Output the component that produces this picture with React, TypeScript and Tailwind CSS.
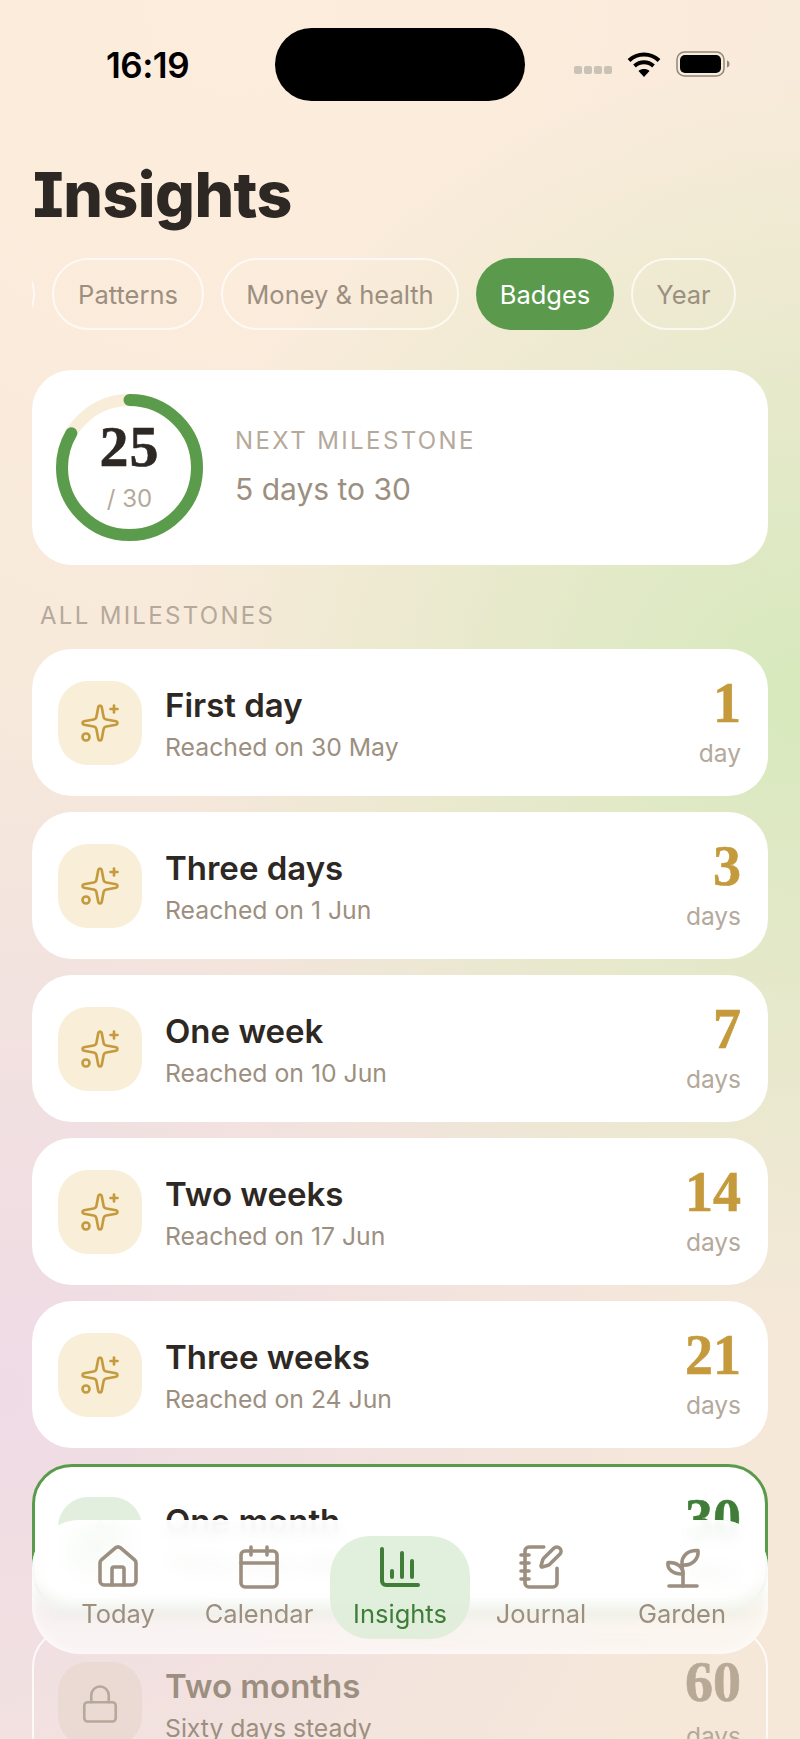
import { Calendar, ChartColumn, House, Lock, NotebookPen, Sparkles } from 'lucide-react';

const milestones = [
    { title: 'First day', sub: 'Reached on 30 May', num: '1', unit: 'day' },
    { title: 'Three days', sub: 'Reached on 1 Jun', num: '3', unit: 'days' },
    { title: 'One week', sub: 'Reached on 10 Jun', num: '7', unit: 'days' },
    { title: 'Two weeks', sub: 'Reached on 17 Jun', num: '14', unit: 'days' },
    { title: 'Three weeks', sub: 'Reached on 24 Jun', num: '21', unit: 'days' },
];

function SproutIcon({ className }: { className?: string }) {
    return (
        <svg viewBox="0 0 24 24" fill="none" stroke="currentColor" strokeWidth="1.8" strokeLinecap="round" strokeLinejoin="round" className={className}>
            <path d="M5.500 21.500h14" />
            <path d="M12.500 21.500V15.500c0-1.500-.5-3-.5-4.500" />
            <path d="M12.500 15.500C12.500 12 9.500 9.500 5 9.800 4.500 13 7.500 15.800 12.500 15.500z" />
            <path d="M12 11C11.500 6.500 15 3.500 20 3.800 20.500 8 17 11.500 12 11z" />
        </svg>
    );
}

function StatusBar() {
    return (
        <div className="flex h-[129px] items-start pt-7">
            <div className="w-[275px] pt-[17px] pl-[106px] text-[35px] leading-[40px] font-semibold tracking-[-0.5px] text-black">16:19</div>
            <div className="h-[73px] w-[250px] rounded-[37px] bg-black" />
            <div className="flex items-center pt-[23px] pl-[49px]">
                <div className="mt-3 flex gap-[2px]">
                    <span className="h-2 w-2 rounded-[2px] bg-[#c9c2b6]" />
                    <span className="h-2 w-2 rounded-[2px] bg-[#c9c2b6]" />
                    <span className="h-2 w-2 rounded-[2px] bg-[#c9c2b6]" />
                    <span className="h-2 w-2 rounded-[2px] bg-[#c9c2b6]" />
                </div>
                <svg viewBox="0 0 34 26" className="ml-[15px] h-[26px] w-[34px]" fill="none" stroke="black" strokeWidth="4">
                    <path d="M2 9.500C10.500 1.500 23.500 1.500 32 9.500" />
                    <path d="M7.500 15c5.500-5 13.500-5 19 0" />
                    <path d="M17 26l-5.500-6c3-2.600 8-2.600 11 0z" fill="black" stroke="none" />
                </svg>
                <svg viewBox="0 0 54 26" className="ml-[15px] h-[26px] w-[54px]">
                    <rect x="1" y="1" width="47" height="24" rx="7.500" fill="none" stroke="#8f8879" strokeWidth="1.500" />
                    <rect x="4" y="4" width="41" height="18" rx="5" fill="black" />
                    <path d="M51 9.500c2 .6 2.500 2 2.500 3.500s-.5 2.900-2.500 3.500z" fill="#8f8879" />
                </svg>
            </div>
        </div>
    );
}

function Chips() {
    return (
        <div className="mx-8 mt-[29px] flex gap-[17px] overflow-hidden text-[25.5px] text-[#9c8f80]">
            <div className="-ml-[100px] h-[72px] w-[103px] shrink-0 rounded-[36px] border-2 border-white/70" />
            <div className="flex h-[72px] w-[152px] shrink-0 items-center justify-center rounded-[36px] border-2 border-white/70 pt-[3px]">Patterns</div>
            <div className="flex h-[72px] w-[238px] shrink-0 items-center justify-center rounded-[36px] border-2 border-white/70 pt-[3px]">Money &amp; health</div>
            <div className="flex h-[72px] w-[138px] shrink-0 items-center justify-center rounded-[36px] bg-[#5b9a4c] pt-[3px] text-white">Badges</div>
            <div className="flex h-[72px] w-[105px] shrink-0 items-center justify-center rounded-[36px] border-2 border-white/70 pt-[3px]">Year</div>
        </div>
    );
}

function HeroCard() {
    const r = 67.5;
    const circ = 2 * Math.PI * r;
    return (
        <div className="mx-8 mt-10 flex h-[195px] items-center rounded-[40px] bg-white pl-6">
            <div className="relative h-[147px] w-[147px] shrink-0">
                <svg viewBox="0 0 147 147" className="h-full w-full -rotate-90">
                    <circle cx="73.5" cy="73.5" r={r} fill="none" stroke="#f8edd8" strokeWidth="12" />
                    <circle cx="73.5" cy="73.5" r={r} fill="none" stroke="#5a9c4c" strokeWidth="12" strokeLinecap="round" strokeDasharray={`${circ * (25 / 30)} ${circ}`} />
                </svg>
                <div className="absolute inset-0 flex flex-col items-center pt-6">
                    <span className="font-['Liberation_Serif',serif] text-[58px] leading-[58px] font-bold tracking-[1px] text-[#2d2823] [-webkit-text-stroke:0.6px_#2d2823]">25</span>
                    <span className="mt-[8px] text-[24px] leading-[30px] text-[#b5a99b]">/ 30</span>
                </div>
            </div>
            <div className="ml-8">
                <div className="-mt-[2px] text-[24px] leading-[30px] tracking-[2.4px] text-[#b5a99b]">NEXT MILESTONE</div>
                <div className="mt-[14px] text-[30px] leading-[38px] text-[#9c8f80]">5 days to 30</div>
            </div>
        </div>
    );
}

function MilestoneRow({ title, sub, num, unit }: { title: string; sub: string; num: string; unit: string }) {
    return (
        <div className="flex h-[147px] items-center rounded-[40px] bg-white pr-[27px] pl-[26px]">
            <div className="flex h-[84px] w-[84px] shrink-0 items-center justify-center rounded-[30px] bg-[#f9eed8]">
                <Sparkles size={42} strokeWidth={1.5} className="text-[#c49a3c]" />
            </div>
            <div className="ml-[23px] flex-1 pt-[2px]">
                <div className="text-[33px] leading-[38px] font-semibold text-[#2d2823]">{title}</div>
                <div className="mt-[8px] text-[24.75px] leading-[30px] text-[#9c8f80]">{sub}</div>
            </div>
            <div className="text-right">
                <div className="-mt-[3px] font-['Liberation_Serif',serif] text-[56px] leading-[56px] font-bold text-[#c49a3c] [-webkit-text-stroke:0.6px_#c49a3c]">{num}</div>
                <div className="mt-[7px] text-[24.5px] leading-[30px] text-[#b5a99b]">{unit}</div>
            </div>
        </div>
    );
}

function NavItem({ label, icon, active }: { label: string; icon: React.ReactNode; active?: boolean }) {
    return (
        <div className={active ? 'flex h-[103px] w-[140px] flex-col items-center rounded-[40px] bg-[#deedd9]/90 pt-[7px] text-[#3f7d38]' : 'flex h-[103px] w-[140px] flex-col items-center pt-[7px] text-[#9c8f80]'}>
            {icon}
            <span className="mt-[7px] text-[25.5px] leading-[32px]">{label}</span>
        </div>
    );
}

function BottomNav() {
    return (
        <div className="absolute right-8 bottom-[85px] left-8 flex h-[134px] items-center justify-center gap-[1px] rounded-[48px] bg-[linear-gradient(to_bottom,rgba(255,255,255,0.93),rgba(255,255,255,0.87)_45%,rgba(255,255,255,0.55)_70%,rgba(255,255,255,0.6))] shadow-[inset_0_0_10px_rgba(255,255,255,0.95)] backdrop-blur-[8px]">
            <NavItem label="Today" icon={<House size={48} strokeWidth={1.8} />} />
            <NavItem label="Calendar" icon={<Calendar size={48} strokeWidth={1.8} />} />
            <NavItem label="Insights" icon={<ChartColumn size={48} strokeWidth={2} />} active />
            <NavItem label="Journal" icon={<NotebookPen size={48} strokeWidth={1.8} />} />
            <NavItem label="Garden" icon={<SproutIcon className="h-12 w-12" />} />
        </div>
    );
}

export default function App() {
    return (
        <div className="relative h-[1739px] w-[800px] overflow-hidden bg-[#f5e8d9] bg-[radial-gradient(circle_at_100%_40%,#d7e9bd_0,rgba(215,233,189,0)_48%),radial-gradient(circle_at_0%_80%,#efdbe6_0,rgba(239,219,230,0)_45%),radial-gradient(circle_at_30%_0%,#fdeddd_0,rgba(253,237,221,0)_60%)] font-['Inter',sans-serif]">
            <StatusBar />
            <h1 className="mt-[30px] pl-[33px] text-[62.5px] leading-[70px] font-extrabold tracking-[-0.5px] text-[#2d2823] [font-feature-settings:'ss02','cv08']">Insights</h1>
            <Chips />
            <HeroCard />
            <div className="mt-[36px] pl-10 text-[24px] leading-[30px] tracking-[2.3px] text-[#b5a99b]">ALL MILESTONES</div>
            <div className="mx-8 mt-[18px] flex flex-col gap-4">
                {milestones.map((m) => (
                    <MilestoneRow key={m.title} {...m} />
                ))}

                {/* current goal, sits under the nav */}
                <div className="flex h-[147px] items-center rounded-[40px] border-[3px] border-[#5a9a4b] bg-white pt-[2px] pr-[24px] pl-[23px]">
                    <div className="flex h-[84px] w-[84px] shrink-0 items-center justify-center rounded-[30px] bg-[#e2efdf]">
                        <Sparkles size={42} strokeWidth={1.5} className="text-[#5a9a4b]" />
                    </div>
                    <div className="ml-[23px] flex-1 pt-[2px]">
                        <div className="text-[33px] leading-[38px] font-semibold text-[#2d2823]">One month</div>
                        <div className="mt-[8px] text-[24.75px] leading-[30px] text-[#9c8f80]">Thirty days steady</div>
                    </div>
                    <div className="text-right">
                        <div className="-mt-[3px] font-['Liberation_Serif',serif] text-[56px] leading-[56px] font-bold text-[#3f7d38] [-webkit-text-stroke:0.6px_#3f7d38]">30</div>
                        <div className="mt-[7px] text-[24.5px] leading-[30px] text-[#b5a99b]">days</div>
                    </div>
                </div>

                {/* locked */}
                <div className="flex h-[147px] items-center rounded-[40px] border-2 border-white/80 pt-[6px] pr-[25px] pl-6">
                    <div className="flex h-[84px] w-[84px] shrink-0 items-center justify-center rounded-[30px] bg-[#ebd9d3]">
                        <Lock size={42} strokeWidth={1.5} className="text-[#b5a99b]" />
                    </div>
                    <div className="ml-[23px] flex-1 pt-[2px]">
                        <div className="text-[33px] leading-[38px] font-semibold text-[#9c8f80]">Two months</div>
                        <div className="mt-[8px] text-[24.75px] leading-[30px] text-[#9c8f80]">Sixty days steady</div>
                    </div>
                    <div className="text-right">
                        <div className="-mt-[3px] font-['Liberation_Serif',serif] text-[56px] leading-[56px] font-bold text-[#b8a996] [-webkit-text-stroke:0.6px_#b8a996]">60</div>
                        <div className="mt-[11px] text-[24.5px] leading-[30px] text-[#b5a99b]">days</div>
                    </div>
                </div>
            </div>
            <BottomNav />
        </div>
    );
}
